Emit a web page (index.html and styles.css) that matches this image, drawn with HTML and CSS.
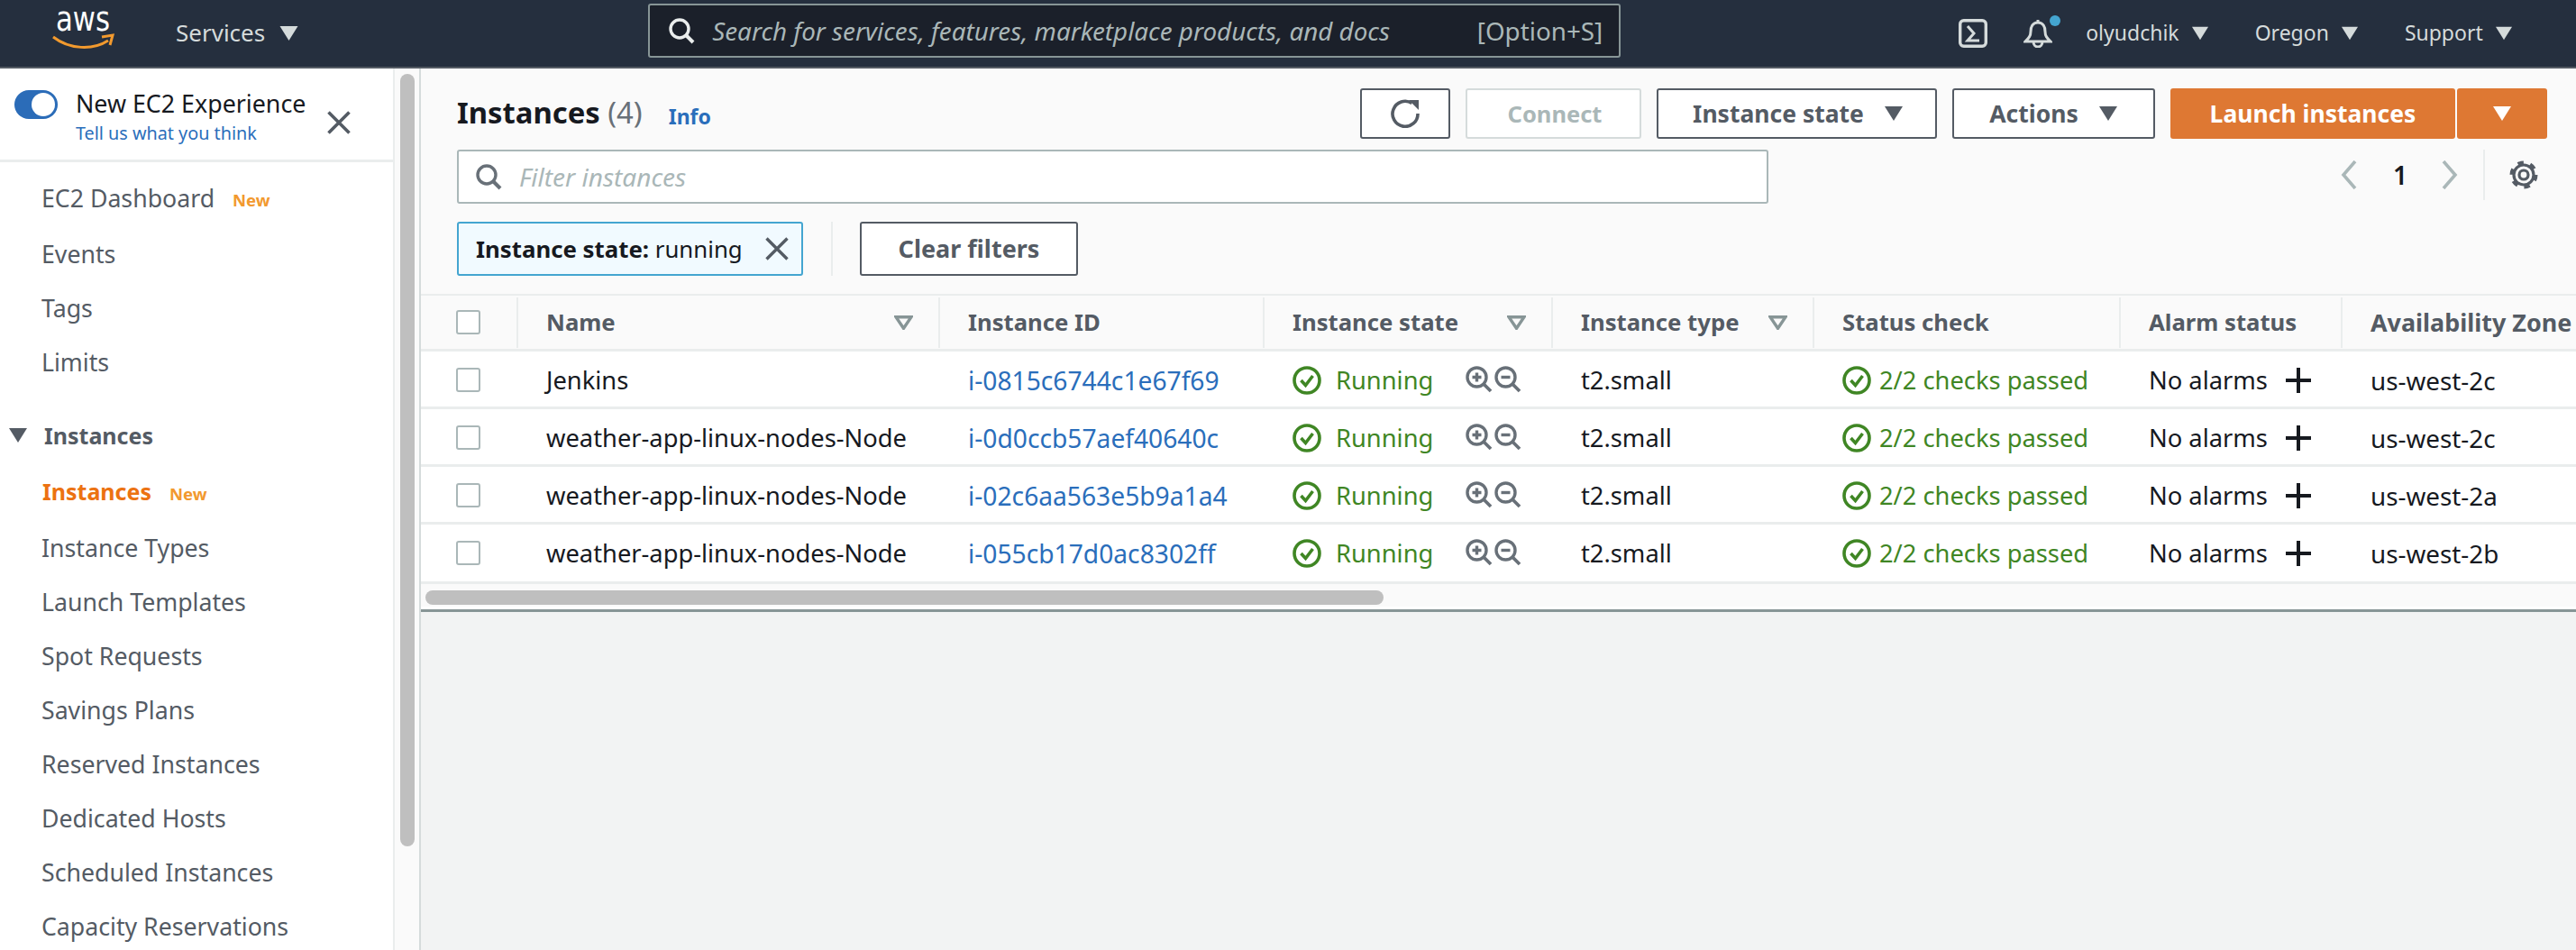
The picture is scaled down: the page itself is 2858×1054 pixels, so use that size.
FILE: index.html
```html
<!DOCTYPE html>
<html lang="en">
<head>
<meta charset="utf-8">
<title>Instances | EC2 Management Console</title>
<link rel="stylesheet" href="styles.css">
</head>
<body>
<svg class="defs" width="0" height="0">
  <symbol id="i-check" viewBox="0 0 32 32"><circle cx="16" cy="16" r="14" fill="none" stroke="currentColor" stroke-width="3.6"/><path d="M9.5 16l5 5.5 8-10.5" fill="none" stroke="currentColor" stroke-width="3.6"/></symbol>
  <symbol id="i-zoomin" viewBox="0 0 30 30"><circle cx="12.500" cy="12.500" r="10.500" fill="none" stroke="currentColor" stroke-width="3.400"/><path d="M20 20l8 8" stroke="currentColor" stroke-width="3.800" fill="none"/><path d="M7.500 12.500h10M12.500 7.500v10" stroke="currentColor" stroke-width="3.400" fill="none"/></symbol>
  <symbol id="i-zoomout" viewBox="0 0 30 30"><circle cx="12.500" cy="12.500" r="10.500" fill="none" stroke="currentColor" stroke-width="3.400"/><path d="M20 20l8 8" stroke="currentColor" stroke-width="3.800" fill="none"/><path d="M7.500 12.500h10" stroke="currentColor" stroke-width="3.400" fill="none"/></symbol>
  <symbol id="i-plus" viewBox="0 0 28 28"><path d="M0 14h28M14 0v28" stroke="currentColor" stroke-width="4" fill="none"/></symbol>
  <symbol id="i-sort" viewBox="0 0 21 16"><path d="M2 1.700h17L10.500 14.300z" fill="none" stroke="currentColor" stroke-width="3.400"/></symbol>
  <symbol id="i-tri" viewBox="0 0 20 16"><path d="M0 0h20L10 16z" fill="currentColor"/></symbol>
</svg>

<header class="topbar">
  <svg class="aws-logo" width="90" height="74" viewBox="0 0 90 74">
    <text x="4" y="34" class="aws-text" textLength="60" lengthAdjust="spacingAndGlyphs">aws</text>
    <path d="M1 41c18 14 44 15 61 4" fill="none" stroke="#f29a2e" stroke-width="3"/>
    <path d="M55 41l12-2-3 11" fill="none" stroke="#f29a2e" stroke-width="3"/>
  </svg>
  <div class="services">Services<svg class="tri-top tri-big"><use href="#i-tri"/></svg></div>
  <div class="global-search">
    <svg class="search-icon" width="30" height="30" viewBox="0 0 30 30"><circle cx="13" cy="13" r="10" fill="none" stroke="#eaeded" stroke-width="3.400"/><path d="M20 20l8 8" stroke="#eaeded" stroke-width="4"/></svg>
    <span class="search-placeholder">Search for services, features, marketplace products, and docs</span>
    <span class="search-key">[Option+S]</span>
  </div>
  <div class="top-right">
    <svg class="terminal" width="32" height="32" viewBox="0 0 32 32"><rect x="1.700" y="1.700" width="28.600" height="28.600" rx="4" fill="none" stroke="#d5dbdb" stroke-width="3.400"/><path d="M10 8l7 8-7 8h13" fill="none" stroke="#d5dbdb" stroke-width="3"/></svg>
    <div class="bell">
      <svg width="32" height="32" viewBox="0 0 32 32"><path d="M16 4c-6 0-8 5-8 10 0 5-2 7-6 11h28c-4-4-6-6-6-11 0-5-2-10-8-10zM16 1v3M11 25c0 8 10 8 10 0" fill="none" stroke="#d5dbdb" stroke-width="3"/></svg>
      <span class="bell-dot"></span>
    </div>
    <div class="top-menu user">olyudchik<svg class="tri-top"><use href="#i-tri"/></svg></div>
    <div class="top-menu region">Oregon<svg class="tri-top"><use href="#i-tri"/></svg></div>
    <div class="top-menu">Support<svg class="tri-top"><use href="#i-tri"/></svg></div>
  </div>
</header>

<div class="layout">
  <aside class="sidebar">
    <div class="experience">
      <span class="toggle"><span class="knob"></span></span>
      <div class="exp-text">
        <div class="exp-title">New EC2 Experience</div>
        <a class="exp-link">Tell us what you think</a>
      </div>
      <svg class="exp-close" width="26" height="26" viewBox="0 0 26 26"><path d="M1.500 1.500l23 23M24.500 1.500l-23 23" stroke="#545b64" stroke-width="3.600" fill="none"/></svg>
    </div>
    <nav class="nav">
      <a class="nav-item first">EC2 Dashboard<span class="new">New</span></a>
      <a class="nav-item">Events</a>
      <a class="nav-item">Tags</a>
      <a class="nav-item">Limits</a>
      <div class="nav-head"><svg class="nav-caret"><use href="#i-tri"/></svg>Instances</div>
      <a class="nav-item active">Instances<span class="new">New</span></a>
      <a class="nav-item">Instance Types</a>
      <a class="nav-item">Launch Templates</a>
      <a class="nav-item">Spot Requests</a>
      <a class="nav-item">Savings Plans</a>
      <a class="nav-item">Reserved Instances</a>
      <a class="nav-item">Dedicated Hosts</a>
      <a class="nav-item">Scheduled Instances</a>
      <a class="nav-item">Capacity Reservations</a>
    </nav>
  </aside>
  <div class="side-scroll"><div class="side-thumb"></div></div>

  <main class="main">
    <section class="panel">
      <div class="toolbar">
        <h1 class="title">Instances <span class="count">(4)</span></h1>
        <a class="info">Info</a>
        <div class="actions">
          <button class="btn btn-icon"><svg width="32" height="32" viewBox="0 0 32 32"><path d="M23.500 4.500A14 14 0 1 0 30 16" fill="none" stroke="#545b64" stroke-width="3.600"/><path d="M20 1h11v11z" fill="#545b64"/></svg></button>
          <button class="btn btn-disabled">Connect</button>
          <button class="btn btn-state">Instance state<svg class="tri-btn"><use href="#i-tri"/></svg></button>
          <button class="btn btn-actions">Actions<svg class="tri-btn"><use href="#i-tri"/></svg></button>
          <div class="split">
            <button class="btn btn-primary">Launch instances</button>
            <button class="btn btn-primary btn-caret"><svg class="tri-btn"><use href="#i-tri"/></svg></button>
          </div>
        </div>
      </div>
      <div class="filter-row">
        <div class="filter">
          <svg width="30" height="30" viewBox="0 0 30 30"><circle cx="13" cy="13" r="10" fill="none" stroke="#687078" stroke-width="3.400"/><path d="M20 20l8 8" stroke="#687078" stroke-width="4"/></svg>
          <span class="filter-placeholder">Filter instances</span>
        </div>
        <div class="pager">
          <svg width="18" height="32" viewBox="0 0 18 32"><path d="M16 1L3 16l13 15" fill="none" stroke="#aab7b8" stroke-width="3.600"/></svg>
          <span class="page-num">1</span>
          <svg width="18" height="32" viewBox="0 0 18 32"><path d="M2 1l13 15L2 31" fill="none" stroke="#aab7b8" stroke-width="3.600"/></svg>
          <span class="pager-sep"></span>
          <svg class="gear" width="32" height="32" viewBox="0 0 32 32"><circle cx="16" cy="16" r="5" fill="none" stroke="#545b64" stroke-width="3.200"/><circle cx="16" cy="16" r="11" fill="none" stroke="#545b64" stroke-width="3.200"/><circle cx="16" cy="16" r="13.500" fill="none" stroke="#545b64" stroke-width="4" stroke-dasharray="6.500 7.640"/></svg>
        </div>
      </div>
      <div class="chip-row">
        <div class="chip"><span><b>Instance state:</b> running</span><svg width="26" height="26" viewBox="0 0 26 26"><path d="M1.500 1.500l23 23M24.500 1.500l-23 23" stroke="#545b64" stroke-width="3.400" fill="none"/></svg></div>
        <span class="chip-sep"></span>
        <button class="btn btn-clear">Clear filters</button>
      </div>
    </section>

    <section class="table">
      <div class="row head">
        <div class="cell cb"><span class="checkbox"></span></div>
        <div class="cell sep">Name<svg class="sort"><use href="#i-sort"/></svg></div>
        <div class="cell sep">Instance ID</div>
        <div class="cell sep">Instance state<svg class="sort"><use href="#i-sort"/></svg></div>
        <div class="cell sep">Instance type<svg class="sort"><use href="#i-sort"/></svg></div>
        <div class="cell sep">Status check</div>
        <div class="cell sep">Alarm status</div>
        <div class="cell sep zone-head">Availability Zone</div>
      </div>

      <div class="row">
        <div class="cell cb"><span class="checkbox"></span></div>
        <div class="cell">Jenkins</div>
        <div class="cell"><a class="link">i-0815c6744c1e67f69</a></div>
        <div class="cell state"><svg class="ok"><use href="#i-check"/></svg><span class="ok-text">Running</span><svg class="zoom z1"><use href="#i-zoomin"/></svg><svg class="zoom z2"><use href="#i-zoomout"/></svg></div>
        <div class="cell">t2.small</div>
        <div class="cell status"><svg class="ok"><use href="#i-check"/></svg><span class="ok-text">2/2 checks passed</span></div>
        <div class="cell">No alarms<svg class="plus"><use href="#i-plus"/></svg></div>
        <div class="cell zone">us-west-2c</div>
      </div>
      <div class="row">
        <div class="cell cb"><span class="checkbox"></span></div>
        <div class="cell">weather-app-linux-nodes-Node</div>
        <div class="cell"><a class="link">i-0d0ccb57aef40640c</a></div>
        <div class="cell state"><svg class="ok"><use href="#i-check"/></svg><span class="ok-text">Running</span><svg class="zoom z1"><use href="#i-zoomin"/></svg><svg class="zoom z2"><use href="#i-zoomout"/></svg></div>
        <div class="cell">t2.small</div>
        <div class="cell status"><svg class="ok"><use href="#i-check"/></svg><span class="ok-text">2/2 checks passed</span></div>
        <div class="cell">No alarms<svg class="plus"><use href="#i-plus"/></svg></div>
        <div class="cell zone">us-west-2c</div>
      </div>
      <div class="row">
        <div class="cell cb"><span class="checkbox"></span></div>
        <div class="cell">weather-app-linux-nodes-Node</div>
        <div class="cell"><a class="link">i-02c6aa563e5b9a1a4</a></div>
        <div class="cell state"><svg class="ok"><use href="#i-check"/></svg><span class="ok-text">Running</span><svg class="zoom z1"><use href="#i-zoomin"/></svg><svg class="zoom z2"><use href="#i-zoomout"/></svg></div>
        <div class="cell">t2.small</div>
        <div class="cell status"><svg class="ok"><use href="#i-check"/></svg><span class="ok-text">2/2 checks passed</span></div>
        <div class="cell">No alarms<svg class="plus"><use href="#i-plus"/></svg></div>
        <div class="cell zone">us-west-2a</div>
      </div>
      <div class="row last">
        <div class="cell cb"><span class="checkbox"></span></div>
        <div class="cell">weather-app-linux-nodes-Node</div>
        <div class="cell"><a class="link">i-055cb17d0ac8302ff</a></div>
        <div class="cell state"><svg class="ok"><use href="#i-check"/></svg><span class="ok-text">Running</span><svg class="zoom z1"><use href="#i-zoomin"/></svg><svg class="zoom z2"><use href="#i-zoomout"/></svg></div>
        <div class="cell">t2.small</div>
        <div class="cell status"><svg class="ok"><use href="#i-check"/></svg><span class="ok-text">2/2 checks passed</span></div>
        <div class="cell">No alarms<svg class="plus"><use href="#i-plus"/></svg></div>
        <div class="cell zone">us-west-2b</div>
      </div>
      <div class="h-scroll"><div class="h-thumb"></div></div>
    </section>
    <div class="lower"></div>
  </main>
</div>
</body>
</html>
```

FILE: styles.css
```css
* { box-sizing: border-box; }
html, body { margin: 0; height: 1054px; overflow: hidden; }
body { font-family: "Noto Sans", "Open Sans", sans-serif; font-size: 27.300px; color: #16191f; background: #fff; }
.defs { position: absolute; }
svg { display: block; flex: none; }
button { font-family: inherit; }

/* top bar */
.topbar { height: 76px; background: #252f3e; border-bottom: 2px solid #545b64; display: flex; align-items: center; color: #d5dbdb; padding-left: 58px; }
.aws-text { font-family: "DejaVu Sans", sans-serif; font-size: 37px; fill: #fff; }
.services { display: flex; align-items: center; margin-left: 47px; font-size: 26px; margin-top: -3px; }
.tri-top { width: 18px; height: 16px; margin-left: 16px; color: #d5dbdb; }
.services .tri-top { margin-top: 3px; }
.tri-big { width: 21px; }
.global-search { width: 1079px; height: 60px; margin-left: 388px; margin-top: -7px; background: #1b202a; border: 2px solid #879596; border-radius: 3px; display: flex; align-items: center; padding: 0 18px 0 20px; }
.search-icon { margin-right: 19px; }
.search-placeholder { font-style: italic; color: #aab7b8; font-size: 27.800px; }
.search-key { margin-left: auto; color: #aab7b8; font-size: 27.800px; }
.top-right { display: flex; align-items: center; margin-left: 375px; font-size: 23px; }
.bell { position: relative; margin-left: 40px; }
.bell-dot { position: absolute; left: 29px; top: -4px; width: 12px; height: 12px; border-radius: 50%; background: #44a5d0; }
.top-menu { display: flex; align-items: center; margin-left: 52px; margin-top: -3px; }
.top-menu .tri-top { margin-left: 14px; margin-top: 3px; }
.user { margin-left: 37px; }

/* layout */
.layout { display: flex; height: 978px; }
.sidebar { width: 438px; border-right: 2px solid #eaeded; flex: none; overflow: hidden; }
.experience { height: 104px; border-bottom: 3px solid #eaeded; display: flex; padding: 24px 0 0 16px; }
.toggle { width: 48px; height: 32px; border-radius: 16px; background: #2b6cb8; display: flex; align-items: center; justify-content: flex-end; padding-right: 3px; }
.knob { width: 26px; height: 26px; border-radius: 50%; background: #fff; }
.exp-text { margin-left: 20px; margin-top: -3px; }
.exp-title { font-size: 26.800px; line-height: 36px; }
.exp-link { display: block; font-size: 19.800px; line-height: 30px; color: #2a6ebb; }
.exp-close { margin-left: 24px; margin-top: 23px; }
.nav { padding-top: 11px; }
.nav-item { height: 60px; display: flex; align-items: center; padding-left: 46px; color: #545b64; font-size: 26.700px; }
.nav-item.first { margin-top: -2px; margin-bottom: 2px; }
.nav-item .new { margin-left: 20px; color: #f2992e; font-size: 18.500px; font-weight: 700; margin-top: 4px; }
.nav-item.active { color: #ec7211; font-weight: 700; font-size: 25px; padding-left: 47px; margin-bottom: 2px; }
.nav-head { height: 60px; margin-top: 22px; margin-bottom: 2px; display: flex; align-items: center; color: #545b64; font-weight: 700; font-size: 25px; padding-left: 10px; }
.nav-caret { width: 20px; height: 16px; margin-right: 19px; }
.side-scroll { width: 29px; flex: none; background: #fafafa; border-right: 2px solid #d5dbdb; padding: 6px 0 0 6px; }
.side-thumb { width: 16px; height: 857px; border-radius: 8px; background: #bfbfbf; }

/* main */
.main { flex: 1; min-width: 0; display: flex; flex-direction: column; background: #f2f3f3; overflow: hidden; }
.panel { background: #fafafa; height: 250px; padding: 22px 0 0 40px; }
.toolbar { display: flex; align-items: center; height: 56px; }
.title { margin: -3px 0 0; font-size: 32.800px; font-weight: 700; }
.count { font-weight: 400; color: #687078; }
.info { color: #2a6ebb; font-size: 23px; font-weight: 700; margin-left: 29px; margin-top: 6px; }
.actions { display: flex; margin-left: auto; margin-right: 32px; gap: 17px; }
.btn { height: 56px; border: 2px solid #545b64; border-radius: 3px; background: #fff; color: #545b64; font-size: 26.500px; font-weight: 700; display: flex; align-items: center; justify-content: center; padding: 0; }
.btn-icon { width: 100px; }
.btn-disabled { width: 195px; border-color: #d5dbdb; color: #aab7b8; font-size: 25.500px; padding-left: 3px; }
.btn-state { width: 311px; padding-left: 3px; }
.btn-actions { width: 225px; }
.tri-btn { width: 22px; height: 16px; margin-left: 22px; }
.split { display: flex; gap: 2px; }
.btn-primary { background: #de7833; border: 0; color: #fff; width: 316px; }
.btn-caret { width: 100px; }
.btn-caret .tri-btn { margin: 0; }
.filter-row { display: flex; margin-top: 12px; height: 60px; }
.filter { width: 1455px; height: 60px; background: #fff; border: 2px solid #aab7b8; border-radius: 3px; display: flex; align-items: center; padding-left: 18px; }
.filter-placeholder { margin-left: 19px; font-style: italic; color: #aab7b8; font-size: 28px; }
.pager { margin-left: auto; margin-right: 42px; display: flex; align-items: center; height: 56px; }
.page-num { width: 94px; text-align: center; font-weight: 600; font-size: 28px; padding-left: 2px; }
.pager-sep { width: 2px; height: 56px; background: #eaeded; margin: 0 27px 0 28px; }
.chip-row { display: flex; margin-top: 20px; align-items: stretch; height: 60px; font-size: 25.800px; }
.chip { width: 384px; background: #f1faff; border: 2px solid #44a5d0; border-radius: 3px; display: flex; align-items: center; justify-content: space-between; padding: 0 14px 0 19px; }
.chip b { font-weight: 700; }
.chip-sep { width: 2px; background: #eaeded; margin: 0 30px 0 31px; }
.btn-clear { width: 242px; height: 60px; font-size: 27px; padding-bottom: 2px; }

/* table */
.table { height: 353px; background: #fff; overflow: hidden; border-top: 2px solid #eaeded; border-bottom: 3px solid #879596; }
.row { display: grid; grid-template-columns: 106px 468px 360px 320px 290px 340px 246px 300px; height: 64px; padding-top: 2px; border-bottom: 3px solid #eaeded; align-items: center; width: max-content; min-width: 100%; }
.row.head { height: 62px; padding-top: 0; background: #fafafa; color: #545b64; font-weight: 700; font-size: 25.700px; }
.row.last { height: 66px; padding-bottom: 2px; }
.cell { padding-left: 33px; display: flex; align-items: center; white-space: nowrap; position: relative; }
.cell.cb { padding-left: 39px; }
.checkbox { display: block; width: 27px; height: 27px; border: 2px solid #aab7b8; border-radius: 3px; background: #fff; }
.sep { height: 56px; border-left: 2px solid #eaeded; padding-left: 31px; }
.zone-head { font-size: 26.900px; }
.zone { font-size: 27.800px; }
.sort { width: 21px; height: 16px; margin-left: auto; margin-right: 28px; color: #879596; }
.link { color: #2a6ebb; font-size: 28.200px; }
.ok { width: 32px; height: 32px; color: #3f8624; margin-right: 16px; }
.status .ok { margin-right: 9px; }
.ok-text { color: #3f8624; }
.zoom { width: 30px; height: 30px; color: #687078; margin-top: -1px; }
.z1 { margin-left: 36px; }
.z2 { margin-left: 2px; }
.plus { width: 28px; height: 28px; margin-left: 20px; color: #16191f; }
.h-scroll { height: 25px; background: #fafafa; padding: 7px 0 0 5px; }
.h-thumb { width: 1063px; height: 16px; border-radius: 8px; background: #bfbfbf; }
.lower { flex: 1; }
```
